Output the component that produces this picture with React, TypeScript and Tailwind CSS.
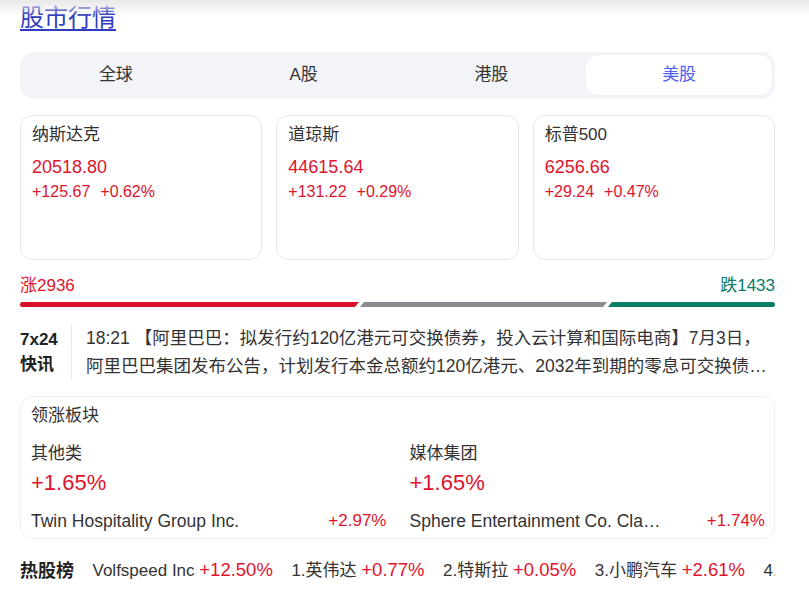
import clsx from 'clsx';

const font = "font-['Liberation_Sans','Noto_Sans_CJK_SC',sans-serif]";

const tabs = ['全球', 'A股', '港股', '美股'];

const indices = [
  { name: '纳斯达克', price: '20518.80', change: '+125.67', pct: '+0.62%' },
  { name: '道琼斯', price: '44615.64', change: '+131.22', pct: '+0.29%' },
  { name: '标普500', price: '6256.66', change: '+29.24', pct: '+0.47%' },
];

const sectors = [
  { name: '其他类', pct: '+1.65%', lead: 'Twin Hospitality Group Inc.', leadPct: '+2.97%' },
  { name: '媒体集团', pct: '+1.65%', lead: 'Sphere Entertainment Co. Class A', leadPct: '+1.74%' },
];

const hot = [
  { name: 'Volfspeed Inc', pct: '+12.50%' },
  { name: '1.英伟达', pct: '+0.77%' },
  { name: '2.特斯拉', pct: '+0.05%' },
  { name: '3.小鹏汽车', pct: '+2.61%' },
  { name: '4.苹果', pct: '+0.34%' },
];

const App = () => {
  return (
    <div className={clsx('relative min-h-[593px] w-[809px] bg-white text-[#333]', font)}>
      <div className="pointer-events-none absolute inset-x-0 top-0 h-4 bg-linear-to-b from-[#e8e8e8] to-white/0" />
      <div className="ml-5 w-[755px] pt-[2px]">
        <a className="block w-fit text-[24px] leading-8 text-[#2f3cbf] underline underline-offset-[3px]" href="#">
          股市行情
        </a>

        <div className="mt-[18px] grid h-[47px] grid-cols-4 rounded-[14px] bg-[#f3f4f8] p-[2px] pb-[3px]">
          {tabs.map((t, i) => (
            <div
              className={clsx(
                'flex items-center justify-center rounded-[13px] text-[17px]',
                i === 3 ? 'border border-[#f0f1f6] bg-white text-[#4f5ff0]' : 'text-[#333]'
              )}
              key={t}
            >
              {t}
            </div>
          ))}
        </div>

        <div className="mt-4 grid grid-cols-3 gap-[14px]">
          {indices.map((c) => (
            <div className="h-[145px] rounded-xl border border-[#e6e6e6] px-[11px] pt-[7px]" key={c.name}>
              <div className="text-[17px] leading-6">{c.name}</div>
              <div className="mt-[8px] text-[18px] leading-6 text-[#e0132d]">{c.price}</div>
              <div className="mt-[1px] flex gap-[10px] text-[16px] leading-6 text-[#e0132d]">
                <span>{c.change}</span>
                <span>{c.pct}</span>
              </div>
            </div>
          ))}
        </div>

        <div className="mt-[14px] flex justify-between text-[17px] leading-6">
          <span className="text-[#e0132d]">涨2936</span>
          <span className="text-[#0b7a66]">跌1433</span>
        </div>
        <div className="mt-[4px] flex h-[5px] gap-[1px]">
          <div className="w-[339px] rounded-l-sm bg-[#d8102a] [clip-path:polygon(0_0,100%_0,calc(100%_-_4px)_100%,0_100%)]" />
          <div className="w-[247px] bg-[#8a8a92] [clip-path:polygon(4px_0,100%_0,calc(100%_-_4px)_100%,0_100%)]" />
          <div className="w-[167px] rounded-r-sm bg-[#0a7d66] [clip-path:polygon(4px_0,100%_0,100%_100%,0_100%)]" />
        </div>

        <div className="mt-[17px] flex">
          <div className="flex w-[52px] shrink-0 flex-col justify-center border-r border-[#e8e8e8] text-[17px] leading-[25px] font-bold text-[#222]">
            <span>7x24</span>
            <span>快讯</span>
          </div>
          <p className="ml-[14px] line-clamp-2 text-[17.5px] leading-[28px] text-[#333]">
            18:21 【阿里巴巴：拟发行约120亿港元可交换债券，投入云计算和国际电商】7月3日，阿里巴巴集团发布公告，计划发行本金总额约120亿港元、2032年到期的零息可交换债券，所得款项将用于云计算基础设施及国际电商业务。
          </p>
        </div>

        <div className="mt-4 rounded-xl border border-[#f0f0f0] pt-[6px] pr-[9px] pb-[4px] pl-[10px]">
          <div className="text-[17px] leading-[26px]">领涨板块</div>
          <div className="mt-[12px] grid grid-cols-2 gap-x-[23px]">
            {sectors.map((s) => (
              <div key={s.name}>
                <div className="text-[17px] leading-[26px]">{s.name}</div>
                <div className="mt-[1px] text-[22px] leading-[30px] text-[#e0132d]">{s.pct}</div>
                <div className="mt-[10px] flex items-center text-[17.5px] leading-[26px]">
                  <span className="max-w-[252px] min-w-0 truncate">{s.lead}</span>
                  <span className="ml-auto text-[17px] text-[#e0132d]">{s.leadPct}</span>
                </div>
              </div>
            ))}
          </div>
        </div>

        <div className="mt-[18px] flex items-center gap-[18.5px] overflow-hidden whitespace-nowrap text-[17px] leading-[26px]">
          <span className="shrink-0 text-[18px] font-bold text-[#222]">热股榜</span>
          {hot.map((h) => (
            <span className="shrink-0" key={h.name}>
              <span className="text-[#333]">{h.name}</span>{' '}
              <span className="text-[18.5px] text-[#e0132d]">{h.pct}</span>
            </span>
          ))}
        </div>
      </div>
    </div>
  );
};

export default App;
